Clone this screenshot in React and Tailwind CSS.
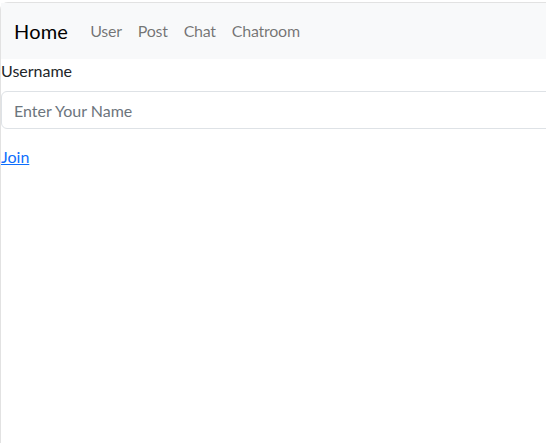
import React from "react";

const App = () => {
  const links = ["User", "Post", "Chat", "Chatroom"];

  return (
    <div className="h-[443px] w-[546px] overflow-hidden bg-white pt-[2px] font-['Lato',sans-serif]">
      <div className="h-full w-[600px] border-l border-t border-[#e2e2e2] rounded-tl-lg text-[#212529]">
        {/* Navbar */}
        <nav className="flex items-center bg-[#f8f9fa] py-2 pl-[13px] pr-3">
          <a className="py-[5px] mr-[14px] text-[20px] leading-[30px] text-black tracking-[0.2px]">
            Home
          </a>
          <ul className="flex">
            {links.map((l) => (
              <li key={l}>
                <a className="block px-2 py-2 text-base leading-6 text-[rgba(0,0,0,0.55)] tracking-[-0.25px]">
                  {l}
                </a>
              </li>
            ))}
          </ul>
        </nav>

        {/* Form */}
        <div>
          <label className="block mb-2 text-base leading-6">Username</label>
          <input
            className="block w-full h-[38px] px-3 text-base border border-[#dee2e6] rounded-md placeholder:text-[#6c757d] outline-none"
            placeholder="Enter Your Name"
          />
          <div className="mt-4">
            <a href="#" className="text-base leading-6 text-[#0d6efd] underline">
              Join
            </a>
          </div>
        </div>
      </div>
    </div>
  );
};

export default App;
